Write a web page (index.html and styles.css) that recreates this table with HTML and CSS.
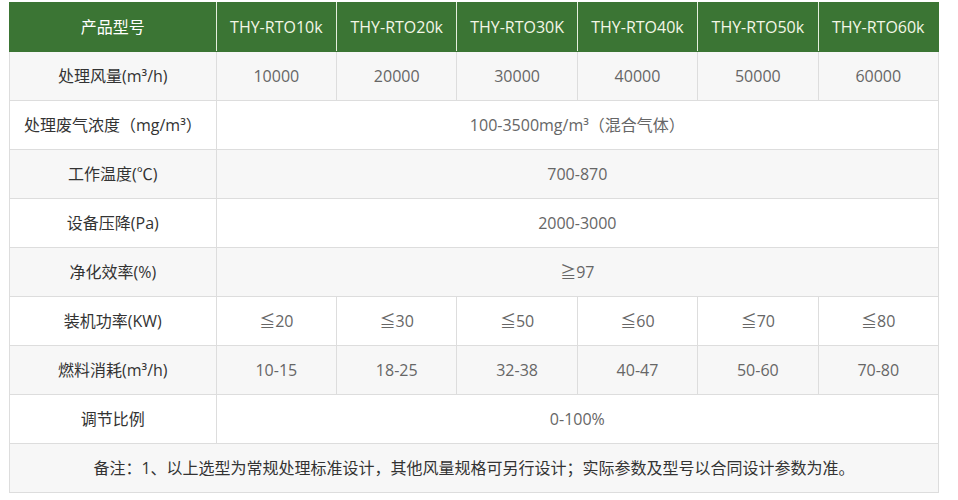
FILE: index.html
```html
<!DOCTYPE html>
<html lang="zh-CN">
<head>
<meta charset="utf-8">
<title>RTO 选型参数</title>
<link rel="stylesheet" href="styles.css">
</head>
<body>
<table class="spec">
  <colgroup>
    <col class="c-label">
    <col class="c-val"><col class="c-val"><col class="c-val"><col class="c-val"><col class="c-val"><col class="c-val">
  </colgroup>
  <thead>
    <tr>
      <th class="h-label">产品型号</th>
      <th>THY-RTO10k</th>
      <th>THY-RTO20k</th>
      <th>THY-RTO30K</th>
      <th>THY-RTO40k</th>
      <th>THY-RTO50k</th>
      <th>THY-RTO60k</th>
    </tr>
  </thead>
  <tbody>
    <tr class="alt">
      <td class="label">处理风量(m³/h)</td>
      <td>10000</td><td>20000</td><td>30000</td><td>40000</td><td>50000</td><td>60000</td>
    </tr>
    <tr>
      <td class="label">处理废气浓度（mg/m³）</td>
      <td colspan="6">100-3500mg/m³（混合气体）</td>
    </tr>
    <tr class="alt">
      <td class="label">工作温度(℃)</td>
      <td colspan="6">700-870</td>
    </tr>
    <tr>
      <td class="label">设备压降(Pa)</td>
      <td colspan="6">2000-3000</td>
    </tr>
    <tr class="alt">
      <td class="label">净化效率(%)</td>
      <td colspan="6">≧97</td>
    </tr>
    <tr>
      <td class="label">装机功率(KW)</td>
      <td>≦20</td><td>≦30</td><td>≦50</td><td>≦60</td><td>≦70</td><td>≦80</td>
    </tr>
    <tr class="alt">
      <td class="label">燃料消耗(m³/h)</td>
      <td>10-15</td><td>18-25</td><td>32-38</td><td>40-47</td><td>50-60</td><td>70-80</td>
    </tr>
    <tr>
      <td class="label">调节比例</td>
      <td colspan="6">0-100%</td>
    </tr>
    <tr class="alt">
      <td class="note" colspan="7">备注：1、以上选型为常规处理标准设计，其他风量规格可另行设计；实际参数及型号以合同设计参数为准。</td>
    </tr>
  </tbody>
</table>
</body>
</html>
```

FILE: styles.css
```css
html, body {
  margin: 0;
  padding: 0;
  background: #ffffff;
}
body {
  padding: 2px 0 0 9px;
  font-family: "Open Sans", "Noto Sans CJK SC", sans-serif;
  font-size: 16px;
}
.spec {
  border-collapse: collapse;
  table-layout: fixed;
  width: 930px;
}
.c-label { width: 206px; }
.c-val { width: 120px; }
.spec th,
.spec td {
  height: 48px;
  padding: 0;
  text-align: center;
  vertical-align: middle;
  border: 1px solid #dddddd;
  white-space: nowrap;
  line-height: 20px;
}
.spec thead th {
  background: #3b7534;
  color: #f3f7e6;
  font-weight: normal;
  border: 1px solid #3b7534;
  border-left-color: #e4eedd;
  border-right-color: #e4eedd;
}
.spec thead th:first-child { border-left-color: #3b7534; }
.spec thead th:last-child { border-right-color: #3b7534; }
.spec thead .h-label { color: #ffffff; }
.spec td {
  color: #666666;
  background: #ffffff;
}
.spec tr.alt td { background: #f7f7f7; }
.spec td.label { color: #333333; }
.spec td.note { color: #333333; }
```
